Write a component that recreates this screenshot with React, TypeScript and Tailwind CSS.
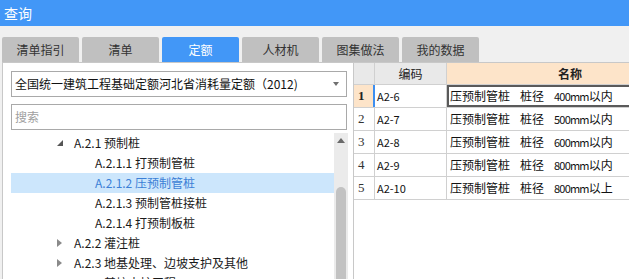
import React from "react";

const tabs = ["清单指引", "清单", "定额", "人材机", "图集做法", "我的数据"];

type TreeRow = { text: string; level: 1 | 2; arrow?: "open" | "closed"; selected?: boolean };
const tree: TreeRow[] = [
  { text: "A.2.1 预制桩", level: 1, arrow: "open" },
  { text: "A.2.1.1 打预制管桩", level: 2 },
  { text: "A.2.1.2 压预制管桩", level: 2, selected: true },
  { text: "A.2.1.3 预制管桩接桩", level: 2 },
  { text: "A.2.1.4 打预制板桩", level: 2 },
  { text: "A.2.2 灌注桩", level: 1, arrow: "closed" },
  { text: "A.2.3 地基处理、边坡支护及其他", level: 1, arrow: "closed" },
  { text: "A.2.4 基坑支护工程", level: 1, arrow: "closed" },
];

const rows = [
  { n: "1", code: "A2-6", size: "400mm", tail: "以内" },
  { n: "2", code: "A2-7", size: "500mm", tail: "以内" },
  { n: "3", code: "A2-8", size: "600mm", tail: "以内" },
  { n: "4", code: "A2-9", size: "800mm", tail: "以内" },
  { n: "5", code: "A2-10", size: "800mm", tail: "以上" },
];

export default function App() {
  return (
    <div
      className="w-[629px] h-[279px] overflow-hidden bg-[#f0f0f0] flex flex-col"
      style={{ fontFamily: '"Noto Sans CJK SC", "Microsoft YaHei", sans-serif' }}
    >
      {/* title bar */}
      <div className="h-[26px] shrink-0 bg-[#4297f7] flex items-center pl-[4px] text-white text-[14px]">
        查询
      </div>
      {/* tabs */}
      <div className="mt-[11px] h-[25px] shrink-0 flex pl-[2px] gap-[3px]">
        {tabs.map((t) => (
          <div
            key={t}
            className={
              t === "定额"
                ? "w-[77px] rounded-t-[2px] bg-[#4297f7] text-white text-[12px] flex items-center justify-center"
                : "w-[77px] rounded-t-[2px] bg-[#c0c0c0] text-[#333333] text-[12px] flex items-center justify-center"
            }
          >
            {t}
          </div>
        ))}
      </div>
      {/* content */}
      <div className="flex-1 flex border-t border-[#c8c8c8] ml-[2px] min-h-0">
        {/* left panel */}
        <div className="w-[351px] shrink-0 bg-white border-l border-[#c8c8c8] flex flex-col pt-[8px] pl-[8px] min-h-0">
          <div className="w-[336px] h-[26px] border border-[#a9a9a9] flex items-center justify-between pl-[3px] pr-[7px] text-[12px] text-[#111111]">
            <span>全国统一建筑工程基础定额河北省消耗量定额（2012)</span>
            <span className="w-0 h-0 border-l-[3px] border-r-[3px] border-t-[4px] border-l-transparent border-r-transparent border-t-[#707070]" />
          </div>
          <div className="mt-[7px] w-[336px] h-[26px] border border-[#a9a9a9] flex items-center pl-[3px] text-[12px] text-[#a0a0a0]">
            搜索
          </div>
          <div className="mt-[3px] flex flex-1 min-h-0">
            <div className="w-[323px] shrink-0 flex flex-col">
              {tree.map((r) => (
                <div
                  key={r.text}
                  className={
                    r.selected
                      ? "h-[20px] shrink-0 flex items-center bg-[#cce6fc] text-[#3b7fd6] text-[12px] whitespace-nowrap"
                      : "h-[20px] shrink-0 flex items-center text-[#1a1a1a] text-[12px] whitespace-nowrap"
                  }
                >
                  {r.level === 1 ? (
                    <>
                      <span className="w-[46px] shrink-0" />
                      <span className="w-[17px] shrink-0 flex items-center">
                        {r.arrow === "open" ? (
                          <svg width="7" height="7" viewBox="0 0 7 7">
                            <path d="M6 0 L6 6 L0 6 Z" fill="#555555" />
                          </svg>
                        ) : (
                          <svg width="5" height="8" viewBox="0 0 5 8">
                            <path d="M0 0 L5 4 L0 8 Z" fill="#8a8a8a" />
                          </svg>
                        )}
                      </span>
                      <span>{r.text}</span>
                    </>
                  ) : (
                    <>
                      <span className="w-[84px] shrink-0" />
                      <span>{r.text}</span>
                    </>
                  )}
                </div>
              ))}
            </div>
            {/* scrollbar */}
            <div className="w-[14px] shrink-0 bg-[#ebebeb] flex flex-col items-center">
              <div className="h-[14px] flex items-center justify-center">
                <span className="w-0 h-0 border-l-[4px] border-r-[4px] border-b-[5px] border-l-transparent border-r-transparent border-b-[#6a6a6a]" />
              </div>
              <div className="mt-[40px] w-[10px] flex-1 rounded-t-[5px] bg-[#c2c2c2]" />
            </div>
          </div>
        </div>
        {/* right panel */}
        <div className="flex-1 bg-white overflow-hidden border-l border-[#c8c8c8]">
          <div className="w-[340px] flex flex-col">
            <div className="h-[22px] flex border-b border-[#d0d0d0]">
              <div className="w-[21px] shrink-0 bg-[#e9e9e9] border-r border-[#d0d0d0]" />
              <div className="w-[72px] shrink-0 bg-[#e9e9e9] border-r border-[#d0d0d0] flex items-center justify-center text-[12px] text-[#222222]">
                编码
              </div>
              <div className="w-[246px] shrink-0 bg-[#fde4c9] flex items-center justify-center text-[12px] font-bold text-[#222222]">
                名称
              </div>
            </div>
            {rows.map((r, i) => (
              <div key={r.n} className="h-[23px] flex border-b border-[#d0d0d0]">
                <div
                  className={
                    i === 0
                      ? "w-[21px] shrink-0 bg-[#fde4c9] border-r-2 border-[#3d8ef0] flex items-center pl-[4px] text-[13px] font-bold text-[#222222]"
                      : "w-[21px] shrink-0 border-r border-[#d0d0d0] flex items-center pl-[4px] text-[13px] text-[#333333]"
                  }
                  style={{ fontFamily: '"Liberation Serif", serif' }}
                >
                  {r.n}
                </div>
                <div className="w-[72px] shrink-0 border-r border-[#d0d0d0] flex items-center pl-[2px] text-[11px] text-[#111111]">
                  {r.code}
                </div>
                <div
                  className={
                    i === 0
                      ? "w-[246px] shrink-0 border-2 border-[#5a5a5a] flex items-center gap-[10px] pl-[1px] text-[12px] text-[#111111] whitespace-nowrap"
                      : "w-[246px] shrink-0 flex items-center gap-[10px] pl-[3px] text-[12px] text-[#111111] whitespace-nowrap"
                  }
                >
                  <span>压预制管桩</span>
                  <span>桩径</span>
                  <span>
                    <span className="text-[11px] tracking-[-0.8px]">{r.size}</span>
                    {r.tail}
                  </span>
                </div>
              </div>
            ))}
          </div>
        </div>
      </div>
    </div>
  );
}
